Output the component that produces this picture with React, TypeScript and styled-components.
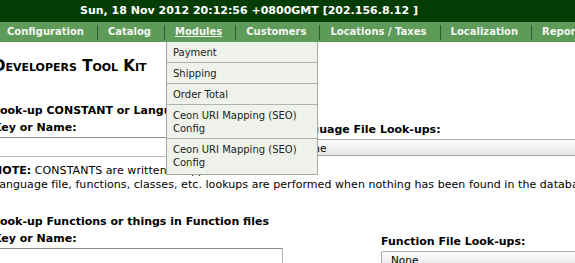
import React from 'react';
import styled, { createGlobalStyle } from 'styled-components';

const GlobalStyle = createGlobalStyle`
  html, body {
    margin: 0;
    padding: 0;
    background: #ffffff;
    overflow: hidden;
  }
  body {
    font-family: 'DejaVu Sans', Verdana, sans-serif;
    color: #000000;
  }
`;

const Page = styled.div`
  width: 760px;
`;

const TopBar = styled.div`
  height: 22px;
  background-color: #033d03;
  color: #ffffff;
  font-size: 11px;
  font-weight: bold;
  line-height: 22px;
  padding-left: 80px;
  white-space: nowrap;
`;

const NavBar = styled.nav`
  height: 20px;
  background-color: #5e9b59;
  display: flex;
  align-items: center;
  padding-left: 7px;
`;

const NavItem = styled.div<{ $active?: boolean }>`
  position: relative;
  color: #f4f6f2;
  font-size: 10px;
  font-weight: bold;
  line-height: 20px;
  white-space: nowrap;
  padding-right: 13px;
  text-decoration: ${p => (p.$active ? 'underline' : 'none')};
`;

const Sep = styled.span`
  width: 1px;
  height: 15px;
  background-color: #2f5a2c;
  margin-right: 10px;
`;

const Dropdown = styled.ul`
  position: absolute;
  top: 20px;
  left: -9px;
  width: 150px;
  margin: 0;
  padding: 0;
  list-style: none;
  background-color: #eef2ea;
  border: 1px solid #a7a9a5;
  border-top: none;
  z-index: 10;
`;

const DropItem = styled.li`
  padding: 4px 6px 3px 6px;
  font-size: 10px;
  font-weight: normal;
  line-height: 13px;
  color: #222222;
  text-decoration: none;
  white-space: normal;
  border-bottom: 1px solid #b1b3af;
  &:last-child {
    border-bottom: none;
    padding-bottom: 5px;
  }
`;

const Content = styled.main`
  margin-left: -7px;
`;

const Title = styled.h1`
  margin: 15px 0 0 0;
  font-size: 15px;
  font-weight: bold;
  font-variant: small-caps;
  line-height: 18px;
`;

const Section = styled.section<{ $top: number }>`
  margin-top: ${p => p.$top}px;
`;

const SectionTitle = styled.h2`
  margin: 0;
  font-size: 11px;
  font-weight: bold;
  line-height: 18px;
`;

const Row = styled.div<{ $leftWidth: number }>`
  display: grid;
  grid-template-columns: ${p => p.$leftWidth}px 1fr;
  align-items: start;
`;

const Cell = styled.div<{ $offset?: number }>`
  display: flex;
  flex-direction: column;
  padding-top: ${p => p.$offset ?? 0}px;
`;

const Label = styled.label`
  font-size: 11px;
  font-weight: bold;
  line-height: 15px;
  margin-bottom: 2px;
`;

const TextInput = styled.input<{ $width: number }>`
  width: ${p => p.$width}px;
  height: 20px;
  box-sizing: border-box;
  margin: 0;
  border: 1px solid #b4b4b4;
  border-top-color: #8c8c8c;
  background: #ffffff;
`;

const Select = styled.select`
  appearance: none;
  width: 100%;
  height: 17px;
  margin: 0;
  padding: 0 0 0 9px;
  font-family: 'DejaVu Sans', Verdana, sans-serif;
  font-size: 10.5px;
  color: #000000;
  border: 1px solid #a9a9a9;
  border-radius: 2px;
  background: linear-gradient(#fdfdfd, #e6e6e6);
`;

const Note = styled.p`
  margin: 7px 0 0 0;
  font-size: 11px;
  line-height: 14px;
  letter-spacing: 0.06px;
  white-space: nowrap;
`;

const modules = [
  'Payment',
  'Shipping',
  'Order Total',
  'Ceon URI Mapping (SEO) Config',
  'Ceon URI Mapping (SEO) Config',
];

const navItems = ['Configuration', 'Catalog', 'Modules', 'Customers', 'Locations / Taxes', 'Localization', 'Reports'];

const App: React.FC = () => {
  return (
    <Page>
      <GlobalStyle />
      <TopBar>Sun, 18 Nov 2012 20:12:56 +0800GMT [202.156.8.12 ]</TopBar>
      <NavBar>
        {navItems.map((item, i) => (
          <React.Fragment key={item}>
            {i > 0 && <Sep />}
            <NavItem $active={item === 'Modules'}>
              {item}
              {item === 'Modules' && (
                <Dropdown>
                  {modules.map((m, j) => (
                    <DropItem key={j}>{m}</DropItem>
                  ))}
                </Dropdown>
              )}
            </NavItem>
          </React.Fragment>
        ))}
      </NavBar>
      <Content>
        <Title>Developers Tool Kit</Title>
        <Section $top={27}>
          <SectionTitle>Look-up CONSTANT or Language File(s)</SectionTitle>
          <Row $leftWidth={296}>
            <Cell>
              <Label>Key or Name:</Label>
              <TextInput type="text" $width={280} />
            </Cell>
            <Cell $offset={2}>
              <Label>Language File Look-ups:</Label>
              <Select defaultValue="None">
                <option>None</option>
              </Select>
            </Cell>
          </Row>
        </Section>
        <Note>
          <strong>NOTE:</strong> CONSTANTS are written in uppercase
          <br />
          Language file, functions, classes, etc. lookups are performed when nothing has been found in the database, if entered
        </Note>
        <Section $top={21}>
          <SectionTitle>Look-up Functions or things in Function files</SectionTitle>
          <Row $leftWidth={388}>
            <Cell>
              <Label>Key or Name:</Label>
              <TextInput type="text" $width={290} />
            </Cell>
            <Cell $offset={3}>
              <Label>Function File Look-ups:</Label>
              <Select defaultValue="None">
                <option>None</option>
              </Select>
            </Cell>
          </Row>
        </Section>
      </Content>
    </Page>
  );
};

export default App;
